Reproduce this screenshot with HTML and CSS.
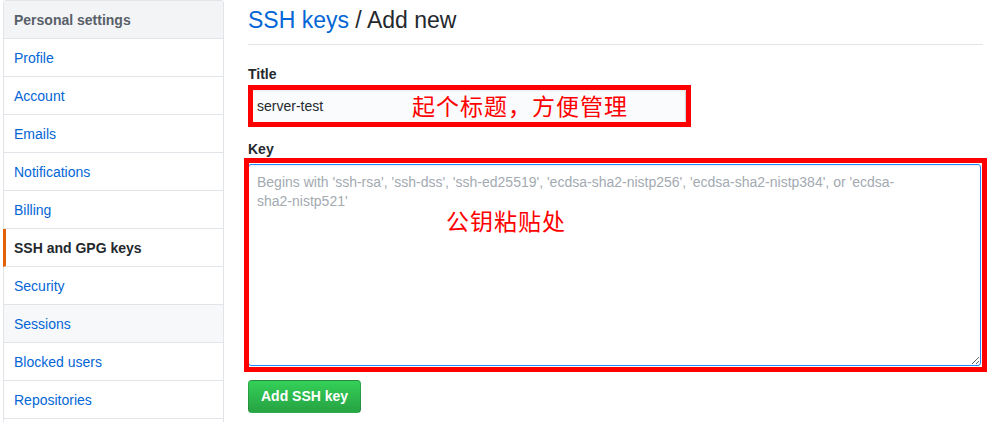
FILE: index.html
```html
<!DOCTYPE html>
<html lang="en">
<head>
<meta charset="utf-8">
<title>SSH keys / Add new</title>
<link rel="stylesheet" href="styles.css">
</head>
<body>
<div class="page">
  <nav class="menu">
    <div class="menu-heading">Personal settings</div>
    <a class="menu-item" href="#">Profile</a>
    <a class="menu-item" href="#">Account</a>
    <a class="menu-item" href="#">Emails</a>
    <a class="menu-item" href="#">Notifications</a>
    <a class="menu-item" href="#">Billing</a>
    <a class="menu-item selected" href="#">SSH and GPG keys</a>
    <a class="menu-item" href="#">Security</a>
    <a class="menu-item hover" href="#">Sessions</a>
    <a class="menu-item" href="#">Blocked users</a>
    <a class="menu-item" href="#">Repositories</a>
    <div class="menu-item menu-more"></div>
  </nav>
  <main class="content">
    <div class="subhead">
      <h2 class="subhead-heading"><a href="#">SSH keys</a> / Add new</h2>
    </div>
    <form class="key-form">
      <div class="form-group">
        <label class="form-label" for="title">Title</label>
        <div class="annot-wrap title-wrap">
          <input id="title" class="form-control title-input" type="text" value="server-test">
          <span class="annot-box title-box"></span>
          <span class="annot-text title-note">起个标题，方便管理</span>
        </div>
      </div>
      <div class="form-group">
        <label class="form-label" for="key">Key</label>
        <div class="annot-wrap key-wrap">
          <textarea id="key" class="form-control key-input" placeholder="Begins with 'ssh-rsa', 'ssh-dss', 'ssh-ed25519', 'ecdsa-sha2-nistp256', 'ecdsa-sha2-nistp384', or 'ecdsa-&#10;sha2-nistp521'"></textarea>
          <span class="annot-box key-box"></span>
          <span class="annot-text key-note">公钥粘贴处</span>
        </div>
      </div>
      <button class="btn-primary" type="button">Add SSH key</button>
    </form>
  </main>
</div>
</body>
</html>
```

FILE: styles.css
```css
html, body {
  margin: 0;
  padding: 0;
  overflow: hidden;
  background: #fff;
}

body {
  font-family: "Liberation Sans", Arial, sans-serif;
  font-size: 14px;
  line-height: 1.5;
  color: #24292e;
}

.page {
  display: flex;
  align-items: flex-start;
  gap: 24px;
  padding: 0 7px 0 3px;
}

/* ---------- sidebar menu ---------- */
.menu {
  flex: none;
  width: 221px;
  box-sizing: border-box;
  border: 1px solid #e1e4e8;
  border-radius: 3px;
  background: #fff;
}

.menu-heading {
  padding: 9px 10px 7px;
  line-height: 21px;
  font-weight: 700;
  color: #586069;
  background: #f3f4f6;
  border-bottom: 1px solid #e1e4e8;
}

.menu-item {
  display: block;
  padding: 9px 10px 7px;
  line-height: 21px;
  color: #0366d6;
  text-decoration: none;
  border-bottom: 1px solid #e1e4e8;
}

.menu-more {
  height: 21px;
}

.menu-item.hover {
  background: #f6f8fa;
}

.menu-item.selected {
  margin-left: -1px;
  padding-left: 8px;
  border-left: 3px solid #e36209;
  color: #24292e;
  font-weight: 700;
}

/* ---------- main content ---------- */
.content {
  flex: 1;
  min-width: 0;
  padding-top: 1px;
}

.subhead {
  padding-top: 4px;
  padding-bottom: 9px;
  border-bottom: 1px solid #e1e4e8;
}

.subhead-heading {
  margin: 0;
  font-size: 23px;
  font-weight: 400;
  line-height: 30px;
  color: #24292e;
}

.subhead-heading a {
  color: #0366d6;
  text-decoration: none;
}

.key-form {
  margin: 0;
  padding-top: 19px;
}

.form-group {
  margin-bottom: 16px;
}

.form-group + .form-group {
  margin-bottom: 14px;
}

.form-label {
  display: block;
  font-weight: 700;
  line-height: 20px;
  margin-bottom: 5px;
}

.form-control {
  display: block;
  box-sizing: border-box;
  font-family: "Liberation Sans", Arial, sans-serif;
  font-size: 14px;
  color: #24292e;
  border: 1px solid #d1d5da;
  border-radius: 3px;
  box-shadow: inset 0 1px 2px rgba(27, 31, 35, 0.075);
  outline: none;
  margin: 0;
}

.title-input {
  width: 438px;
  height: 34px;
  padding: 6px 8px;
  line-height: 20px;
  background: #fafbfc;
}

.key-input {
  width: 733px;
  height: 202px;
  padding: 8px 8px;
  line-height: 19px;
  background: #fff;
  border-color: #2188ff;
  resize: vertical;
}

.key-input::placeholder {
  color: #a3aab1;
  opacity: 1;
}

/* ---------- red annotations drawn over the form ---------- */
.annot-wrap {
  position: relative;
}

.title-wrap {
  width: 438px;
}

.key-wrap {
  width: 733px;
}

.annot-box {
  position: absolute;
  border: 5px solid #ff0000;
  pointer-events: none;
}

.title-box {
  left: 0;
  top: -4px;
  right: -5px;
  bottom: -4px;
}

.key-box {
  left: -4px;
  top: -6px;
  right: -6px;
  bottom: -6px;
}

.annot-text {
  position: absolute;
  font-family: "Noto Sans CJK SC", "Noto Sans", sans-serif;
  font-size: 23px;
  line-height: 30px;
  letter-spacing: 1px;
  color: #ff0000;
  white-space: nowrap;
  pointer-events: none;
}

.title-note {
  left: 164px;
  top: 1px;
}

.key-note {
  left: 198px;
  top: 41px;
}

/* ---------- button ---------- */
.btn-primary {
  display: inline-block;
  box-sizing: border-box;
  height: 33px;
  padding: 6px 12px;
  font-family: "Liberation Sans", Arial, sans-serif;
  font-size: 14px;
  font-weight: 700;
  line-height: 19px;
  color: #fff;
  background-image: linear-gradient(-180deg, #34d058 0%, #28a745 90%);
  border: 1px solid rgba(27, 31, 35, 0.2);
  border-radius: 4px;
  cursor: pointer;
}
```
